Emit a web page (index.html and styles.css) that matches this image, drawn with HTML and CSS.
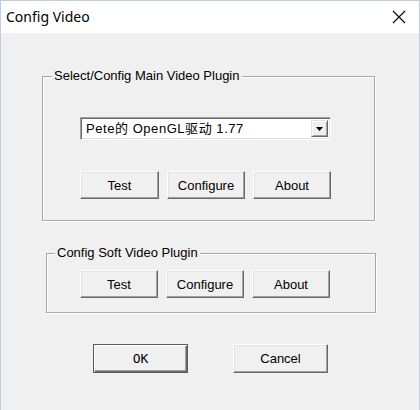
FILE: index.html
```html
<!DOCTYPE html>
<html>
<head>
<meta charset="utf-8">
<link rel="stylesheet" href="styles.css">
</head>
<body>
<div class="window">
  <div class="titlebar">
    <span class="title">Config Video</span>
    <svg class="close" width="14" height="14" viewBox="0 0 14 14"><path d="M1 1 L13 13 M13 1 L1 13" stroke="#000" stroke-width="1.1" fill="none"/></svg>
  </div>
  <div class="client">
    <fieldset class="group group-main">
      <legend>Select/Config Main Video Plugin</legend>
      <div class="group-body">
        <div class="combo">
          <span class="combo-text">Pete的 OpenGL驱动 1.77</span>
          <span class="combo-btn"><svg width="7" height="4" viewBox="0 0 7 4"><path d="M0 0 H7 L3.5 4 Z" fill="#000"/></svg></span>
        </div>
        <div class="btn-row">
          <button class="btn btn-wide">Test</button>
          <button class="btn">Configure</button>
          <button class="btn">About</button>
        </div>
      </div>
    </fieldset>
    <fieldset class="group group-soft">
      <legend>Config Soft Video Plugin</legend>
      <div class="group-body">
        <div class="btn-row">
          <button class="btn">Test</button>
          <button class="btn">Configure</button>
          <button class="btn">About</button>
        </div>
      </div>
    </fieldset>
    <div class="dialog-buttons">
      <button class="btn btn-dialog btn-default">OK</button>
      <button class="btn btn-dialog">Cancel</button>
    </div>
  </div>
</div>
</body>
</html>
```
FILE: styles.css
```css
* { box-sizing: border-box; }
html, body { margin: 0; padding: 0; }
body {
  width: 420px;
  height: 410px;
  overflow: hidden;
  font-family: "Liberation Sans", "Noto Sans CJK SC", sans-serif;
  font-size: 13px;
  color: #000;
  background: #f0f0f0;
}
.window {
  width: 420px;
  height: 410px;
  display: flex;
  flex-direction: column;
  border: 1px solid #bccfe2;
  border-bottom: none;
  background: #f0f0f0;
}
.titlebar {
  height: 32px;
  background: #fff;
  display: flex;
  align-items: center;
  justify-content: space-between;
  padding: 0 8px 0 5px;
  flex: none;
}
.title {
  font-family: "Noto Sans", sans-serif;
  font-size: 14px;
  color: #000;
  margin-top: -1px;
}
.close { display: block; margin-right: 5px; }
.client {
  flex: 1;
  display: flex;
  flex-direction: column;
  align-items: flex-start;
}
.group {
  margin: 0;
  padding: 0;
  border: 1px solid #a8a8a8;
  box-shadow: inset 1px 1px #fff, 1px 1px #fff;
  min-width: 0;
}
.group legend {
  padding: 0 2px;
  line-height: 14px;
  font-size: 13px;
  background: #f0f0f0;
}
.group-main {
  margin: 36px 0 0 41px;
  width: 333px;
}
.group-main legend { margin-left: 9px; }
.group-main .group-body { padding: 34px 0 21px 37px; }
.group-soft {
  margin: 25px 0 0 45px;
  width: 330px;
}
.group-soft legend { margin-left: 8px; }
.group-soft .group-body { padding: 10px 0 14px 33px; }
.combo {
  width: 251px;
  height: 23px;
  display: flex;
  align-items: stretch;
  background: #fff;
  border-top: 1px solid #a0a0a0;
  border-left: 1px solid #a0a0a0;
  border-right: 1px solid #fff;
  border-bottom: 1px solid #fff;
  box-shadow: inset 1px 1px #696969, inset -1px -1px #e3e3e3;
  padding: 2px;
}
.combo-text {
  flex: 1;
  line-height: 17px;
  padding-left: 3px;
  font-size: 13px;
  letter-spacing: 0.55px;
}
.combo-btn {
  width: 17px;
  background: #f0f0f0;
  border-top: 1px solid #e3e3e3;
  border-left: 1px solid #e3e3e3;
  border-right: 1px solid #696969;
  border-bottom: 1px solid #696969;
  box-shadow: inset 1px 1px #fff, inset -1px -1px #a0a0a0;
  display: flex;
  align-items: center;
  justify-content: center;
}
.btn-row {
  display: flex;
  gap: 8px;
  margin-top: 31px;
}
.group-soft .btn-row { margin-top: 0; }
.btn {
  width: 78px;
  height: 28px;
  margin: 0;
  padding: 0;
  font-family: "Liberation Sans", sans-serif;
  font-size: 13px;
  color: #000;
  background: #f0f0f0;
  border-top: 1px solid #fff;
  border-left: 1px solid #fff;
  border-right: 1px solid #696969;
  border-bottom: 1px solid #696969;
  box-shadow: inset -1px -1px #a0a0a0, inset 1px 1px #e3e3e3;
  border-radius: 0;
}
.btn-wide { width: 79px; }
.dialog-buttons {
  display: flex;
  gap: 45px;
  margin: 31px 0 0 92px;
}
.btn-dialog { width: 95px; height: 29px; }
.btn-default {
  border: 1px solid #5a5a5a;
  box-shadow: inset 1px 1px #fff, inset -1px -1px #696969, inset -2px -2px #a0a0a0;
  font-family: "DejaVu Sans Mono", monospace;
  font-size: 13px;
}
```
